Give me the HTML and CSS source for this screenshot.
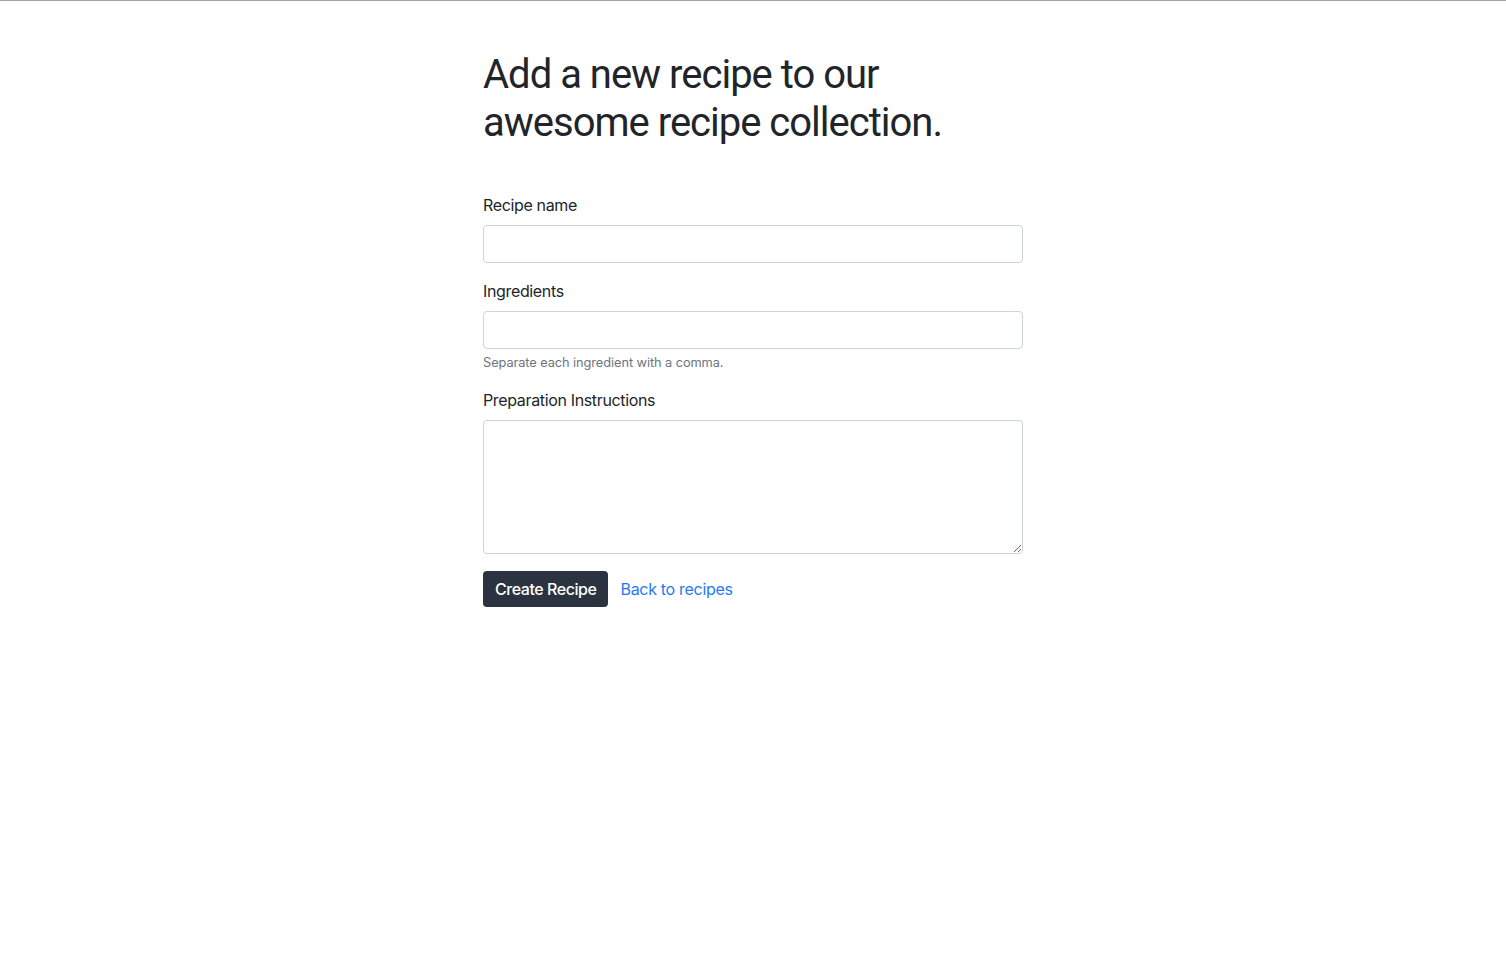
FILE: index.html
```html
<!DOCTYPE html>
<html lang="en">
<head>
<meta charset="utf-8">
<title>New recipe</title>
<link rel="stylesheet" href="styles.css">
</head>
<body>
<main class="container">
  <div class="column">
    <h1 class="title">Add a new recipe to our awesome recipe collection.</h1>
    <form class="recipe-form">
      <div class="form-group">
        <label class="form-label" for="name">Recipe name</label>
        <input class="form-control" id="name" type="text">
      </div>
      <div class="form-group">
        <label class="form-label" for="ingredients">Ingredients</label>
        <input class="form-control" id="ingredients" type="text">
        <small class="form-text">Separate each ingredient with a comma.</small>
      </div>
      <div class="form-group">
        <label class="form-label" for="instructions">Preparation Instructions</label>
        <textarea class="form-control textarea" id="instructions" rows="5"></textarea>
      </div>
      <div class="actions">
        <button type="button" class="btn btn-dark">Create Recipe</button>
        <a href="#" class="btn btn-link">Back to recipes</a>
      </div>
    </form>
  </div>
</main>
</body>
</html>
```

FILE: styles.css
```css
* { box-sizing: border-box; }
html, body { margin: 0; padding: 0; }
body {
  font-family: Inter, "Noto Sans", "Liberation Sans", sans-serif;
  font-size: 16px;
  line-height: 1.5;
  color: #212529;
  background: #fff;
  border-top: 1px solid #a3a3a3;
}
.container {
  display: flex;
  justify-content: center;
  padding-top: 50px;
}
.column { width: 540px; }
.title {
  font-family: Roboto, Inter, "Liberation Sans", sans-serif;
  font-size: 40px;
  font-weight: 400;
  line-height: 48px;
  margin: 0 0 46px;
  letter-spacing: -1px;
}
.recipe-form { display: flex; flex-direction: column; }
.form-group { margin-bottom: 16px; display: flex; flex-direction: column; }
.form-label { margin-bottom: 8px; line-height: 24px; letter-spacing: -0.35px; }
.form-control {
  height: 38px;
  width: 100%;
  border: 1px solid #ced4da;
  border-radius: 4px;
  padding: 6px 12px;
  font: inherit;
  color: #495057;
  background: #fff;
}
.textarea { height: 134px; resize: vertical; }
.form-text {
  margin-top: 4px;
  font-size: 12.8px;
  line-height: 19.2px;
  color: #6c757d;
  letter-spacing: -0.08px;
}
.actions { display: flex; align-items: center; margin-top: 1px; }
.btn {
  font: inherit;
  line-height: 24px;
  padding: 6px 12px;
  border: 0;
  border-radius: 4px;
  text-decoration: none;
}
.btn-dark {
  background: #2c3340;
  color: #fff;
  font-weight: 500;
  letter-spacing: -0.45px;
}
.btn-link { color: #1f7bf5; letter-spacing: -0.3px; }
```
